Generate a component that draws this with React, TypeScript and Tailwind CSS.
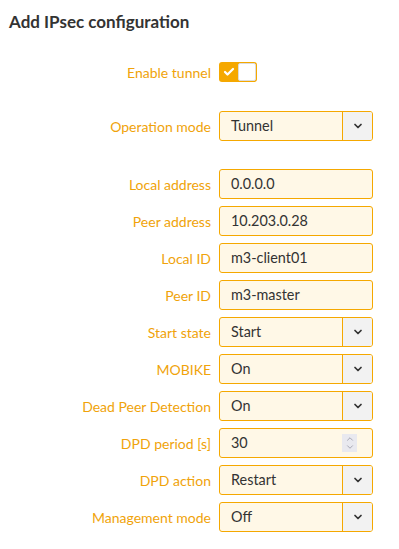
import { Check, ChevronDown, ChevronUp } from "lucide-react"

const orange = "text-[#f0a30a]"

function Row({ label, children }: { label: string; children: React.ReactNode }) {
  return (
    <div className="flex items-center h-[30px]">
      <label className={`w-[219px] shrink-0 pr-[8px] text-right text-[14px] ${orange}`}>{label}</label>
      {children}
    </div>
  )
}

function TextInput({ value }: { value: string }) {
  return (
    <div className="w-[154px] h-[30px] flex items-center pl-[11px] rounded-[3px] border border-[#f5a800] bg-[#fff8e7] text-[14.4px] text-[#333]">
      {value}
    </div>
  )
}

function Select({ value }: { value: string }) {
  return (
    <div className="w-[154px] h-[30px] flex rounded-[3px] border border-[#f5a800] bg-[#fff8e7] text-[14.4px] text-[#333] overflow-hidden">
      <div className="flex-1 flex items-center pl-[11px]">{value}</div>
      <div className="w-[30px] flex items-center justify-center border-l border-[#f5a800] bg-[#f2f2f2]">
        <ChevronDown size={12} strokeWidth={3.5} className="text-[#333]" />
      </div>
    </div>
  )
}

function NumberInput({ value }: { value: string }) {
  return (
    <div className="w-[154px] h-[30px] flex items-center justify-between pl-[11px] pr-[15px] rounded-[3px] border border-[#f5a800] bg-[#fff8e7] text-[14.4px] text-[#333]">
      <span>{value}</span>
      <div className="w-[15px] h-[18px] flex flex-col items-center justify-center bg-[#e9e9ef] text-[#9a9aa8]">
        <ChevronUp size={10} strokeWidth={2} className="-mb-[1px]" />
        <ChevronDown size={10} strokeWidth={2} className="-mt-[1px]" />
      </div>
    </div>
  )
}

export default function App() {
  return (
    <div className="w-[399px] h-[549px] bg-white" style={{ fontFamily: "Lato, 'Open Sans', sans-serif" }}>
      <h2 className="pt-[10px] pl-[9px] text-[17px] leading-6 font-bold text-[#333]">Add IPsec configuration</h2>

      <div className="mt-[28px] flex items-center h-[20px]">
        <label className={`w-[219px] shrink-0 pr-[8px] text-right text-[14px] ${orange}`}>Enable tunnel</label>
        <div className="w-[38px] h-[20px] flex rounded-[3px] bg-[#f5a800] p-[1px]">
          <div className="w-[18px] flex items-center justify-center">
            <Check size={12} strokeWidth={4.5} className="text-white" />
          </div>
          <div className="flex-1 rounded-[2px] bg-white border border-[#dcdcdc]" />
        </div>
      </div>

      <div className="mt-[29px]">
        <Row label="Operation mode">
          <Select value="Tunnel" />
        </Row>
      </div>

      <div className="mt-[28px] flex flex-col gap-[7px]">
        <Row label="Local address"><TextInput value="0.0.0.0" /></Row>
        <Row label="Peer address"><TextInput value="10.203.0.28" /></Row>
        <Row label="Local ID"><TextInput value="m3-client01" /></Row>
        <Row label="Peer ID"><TextInput value="m3-master" /></Row>
        <Row label="Start state"><Select value="Start" /></Row>
        <Row label="MOBIKE"><Select value="On" /></Row>
        <Row label="Dead Peer Detection"><Select value="On" /></Row>
        <Row label="DPD period [s]"><NumberInput value="30" /></Row>
        <Row label="DPD action"><Select value="Restart" /></Row>
        <Row label="Management mode"><Select value="Off" /></Row>
      </div>
    </div>
  )
}
